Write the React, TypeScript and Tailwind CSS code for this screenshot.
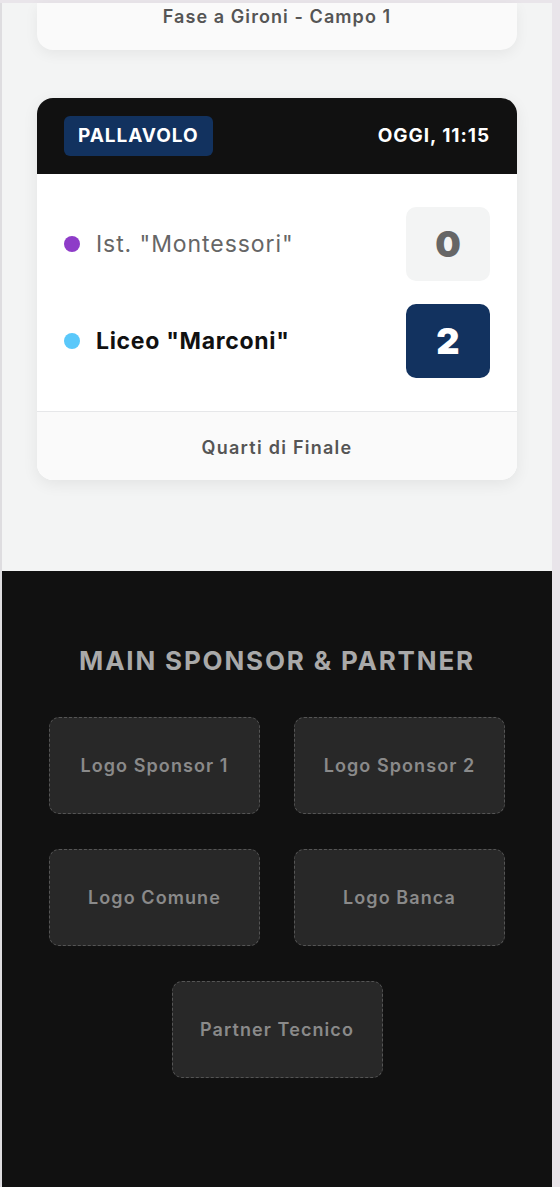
import React from "react";

const font = "[font-family:Inter,'Noto_Sans',sans-serif]";

function ScoreRow({
  dot,
  name,
  score,
  win,
}: {
  dot: string;
  name: string;
  score: string;
  win?: boolean;
}) {
  return (
    <div className="flex items-center justify-between">
      <div className="flex items-center gap-[16px]">
        <span className={`w-[16px] h-[16px] rounded-full ${dot}`} />
        <span
          className={
            win
              ? "text-[23px] font-bold text-[#111111] tracking-[0.03em]"
              : "text-[23px] font-normal text-[#666666] tracking-[0.04em]"
          }
        >
          {name}
        </span>
      </div>
      <div
        className={
          win
            ? "w-[84px] h-[74px] rounded-[10px] bg-[#12325f] flex items-center justify-center text-[36px] font-black text-white"
            : "w-[84px] h-[74px] rounded-[10px] bg-[#f3f4f4] flex items-center justify-center text-[36px] font-black text-[#666666]"
        }
      >
        {score}
      </div>
    </div>
  );
}

function SponsorBox({ label }: { label: string }) {
  return (
    <div className="w-[211px] h-[97px] rounded-[10px] bg-[#282828] border border-dashed border-[#555555] flex items-center justify-center text-[18px] font-semibold text-[#8a8a8a] tracking-[0.06em]">
      {label}
    </div>
  );
}

export default function App() {
  return (
    <div className={`w-[560px] h-[1187px] overflow-hidden bg-[#e9e5ea] pt-[3px] pr-[8px] ${font}`}>
      <div className="h-full border-l-2 border-[#dedde0] flex flex-col">
        <div className="bg-[#f3f4f4] px-[35px] pb-[91px]">
          <div className="h-[47px] rounded-b-[16px] bg-[#fafafa] shadow-[0_4px_14px_rgba(0,0,0,0.06)] flex justify-center pt-[2px]">
            <span className="text-[18px] font-semibold text-[#555555] leading-[24px] tracking-[0.06em]">
              Fase a Gironi - Campo 1
            </span>
          </div>

          <div className="mt-[48px] rounded-[16px] overflow-hidden bg-white shadow-[0_4px_16px_rgba(0,0,0,0.07)]">
            <div className="h-[76px] bg-[#111111] px-[27px] flex items-center justify-between">
              <div className="h-[40px] px-[14px] rounded-[6px] bg-[#12325f] flex items-center text-[19px] font-bold text-white tracking-[0.05em]">
                PALLAVOLO
              </div>
              <div className="text-[19px] font-bold text-white tracking-[0.05em]">OGGI, 11:15</div>
            </div>
            <div className="px-[27px] py-[33px] flex flex-col gap-[23px]">
              <ScoreRow dot="bg-[#8e3cc8]" name={'Ist. "Montessori"'} score="0" />
              <ScoreRow dot="bg-[#5ac8fa]" name={'Liceo "Marconi"'} score="2" win />
            </div>
            <div className="h-[69px] border-t border-[#e6e7e9] bg-[#fafafa] flex items-center justify-center pt-[2px] text-[18px] font-semibold text-[#555555] tracking-[0.07em]">
              Quarti di Finale
            </div>
          </div>
        </div>

        <div className="flex-1 bg-[#111111] pt-[73px] flex flex-col items-center">
          <h2 className="text-[26px] font-bold text-[#a9a9a9] leading-[34px] tracking-[0.07em]">
            MAIN SPONSOR &amp; PARTNER
          </h2>
          <div className="mt-[39px] flex flex-wrap justify-center gap-x-[34px] gap-y-[35px] w-[456px]">
            <SponsorBox label="Logo Sponsor 1" />
            <SponsorBox label="Logo Sponsor 2" />
            <SponsorBox label="Logo Comune" />
            <SponsorBox label="Logo Banca" />
            <SponsorBox label="Partner Tecnico" />
          </div>
        </div>
      </div>
    </div>
  );
}
